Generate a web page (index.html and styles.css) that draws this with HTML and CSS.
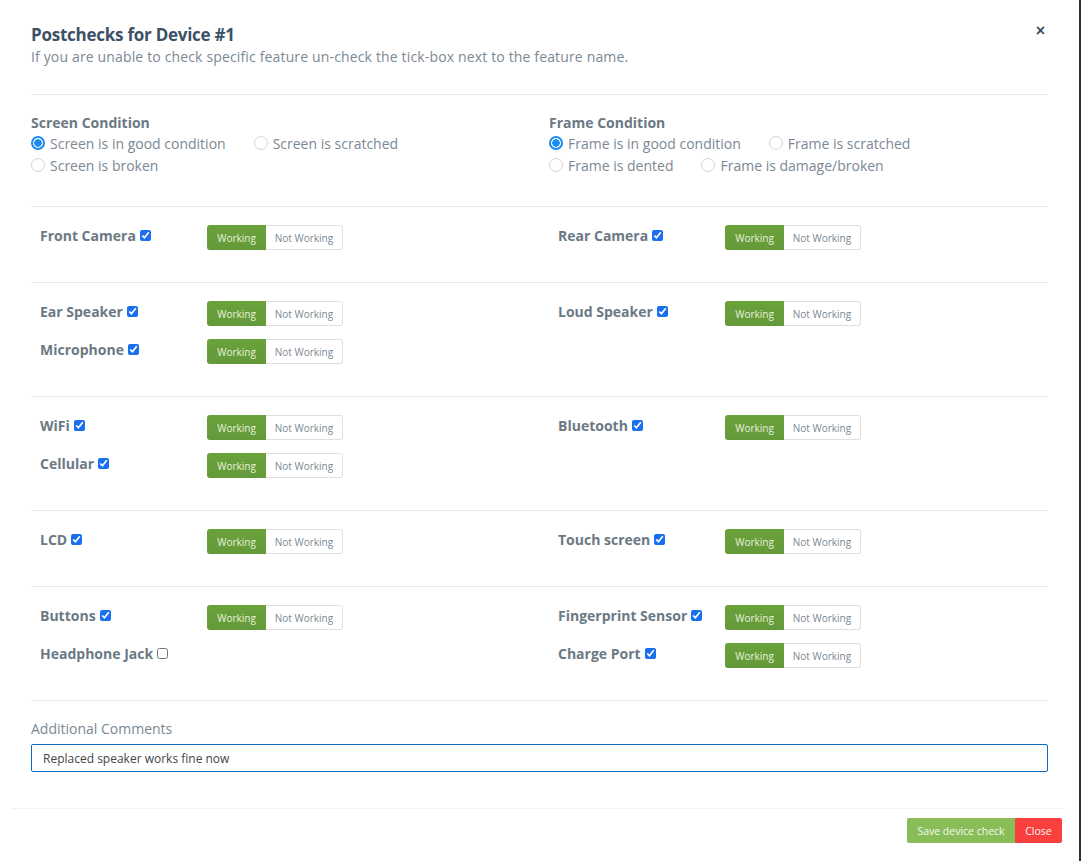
FILE: index.html
```html
<!DOCTYPE html>
<html lang="en">
<head>
    <meta charset="UTF-8">
    <meta name="viewport" content="width=device-width, initial-scale=1.0">
    <title>Postchecks for Device #1</title>
    <link rel="stylesheet" href="styles.css">
</head>
<body>
    <div class="modal">
        <div class="modal-header">
            <div>
                <h2 class="modal-title">Postchecks for Device #1</h2>
                <p class="modal-sub">If you are unable to check specific feature un-check the tick-box next to the feature name.</p>
            </div>
            <button class="close-x">&times;</button>
        </div>

        <div class="modal-body">
            <!-- Conditions -->
            <div class="section conditions">
                <div class="col">
                    <div class="cond-title">Screen Condition</div>
                    <div class="radios">
                        <label class="radio"><input type="radio" name="screen" checked> Screen is in good condition</label>
                        <label class="radio"><input type="radio" name="screen"> Screen is scratched</label>
                        <label class="radio"><input type="radio" name="screen"> Screen is broken</label>
                    </div>
                </div>
                <div class="col">
                    <div class="cond-title">Frame Condition</div>
                    <div class="radios">
                        <label class="radio"><input type="radio" name="frame" checked> Frame is in good condition</label>
                        <label class="radio"><input type="radio" name="frame"> Frame is scratched</label>
                        <label class="radio"><input type="radio" name="frame"> Frame is dented</label>
                        <label class="radio"><input type="radio" name="frame"> Frame is damage/broken</label>
                    </div>
                </div>
            </div>

            <!-- Cameras -->
            <div class="section features">
                <div class="col">
                    <div class="feature">
                        <label class="feature-name">Front Camera <input type="checkbox" checked></label>
                        <div class="btn-group"><span class="on">Working</span><span class="off">Not Working</span></div>
                    </div>
                </div>
                <div class="col">
                    <div class="feature">
                        <label class="feature-name">Rear Camera <input type="checkbox" checked></label>
                        <div class="btn-group"><span class="on">Working</span><span class="off">Not Working</span></div>
                    </div>
                </div>
            </div>

            <!-- Audio -->
            <div class="section features">
                <div class="col">
                    <div class="feature">
                        <label class="feature-name">Ear Speaker <input type="checkbox" checked></label>
                        <div class="btn-group"><span class="on">Working</span><span class="off">Not Working</span></div>
                    </div>
                    <div class="feature">
                        <label class="feature-name">Microphone <input type="checkbox" checked></label>
                        <div class="btn-group"><span class="on">Working</span><span class="off">Not Working</span></div>
                    </div>
                </div>
                <div class="col">
                    <div class="feature">
                        <label class="feature-name">Loud Speaker <input type="checkbox" checked></label>
                        <div class="btn-group"><span class="on">Working</span><span class="off">Not Working</span></div>
                    </div>
                </div>
            </div>

            <!-- Connectivity -->
            <div class="section features">
                <div class="col">
                    <div class="feature">
                        <label class="feature-name">WiFi <input type="checkbox" checked></label>
                        <div class="btn-group"><span class="on">Working</span><span class="off">Not Working</span></div>
                    </div>
                    <div class="feature">
                        <label class="feature-name">Cellular <input type="checkbox" checked></label>
                        <div class="btn-group"><span class="on">Working</span><span class="off">Not Working</span></div>
                    </div>
                </div>
                <div class="col">
                    <div class="feature">
                        <label class="feature-name">Bluetooth <input type="checkbox" checked></label>
                        <div class="btn-group"><span class="on">Working</span><span class="off">Not Working</span></div>
                    </div>
                </div>
            </div>

            <!-- Display -->
            <div class="section features">
                <div class="col">
                    <div class="feature">
                        <label class="feature-name">LCD <input type="checkbox" checked></label>
                        <div class="btn-group"><span class="on">Working</span><span class="off">Not Working</span></div>
                    </div>
                </div>
                <div class="col">
                    <div class="feature">
                        <label class="feature-name">Touch screen <input type="checkbox" checked></label>
                        <div class="btn-group"><span class="on">Working</span><span class="off">Not Working</span></div>
                    </div>
                </div>
            </div>

            <!-- Hardware -->
            <div class="section features">
                <div class="col">
                    <div class="feature">
                        <label class="feature-name">Buttons <input type="checkbox" checked></label>
                        <div class="btn-group"><span class="on">Working</span><span class="off">Not Working</span></div>
                    </div>
                    <div class="feature">
                        <label class="feature-name">Headphone Jack <input type="checkbox"></label>
                    </div>
                </div>
                <div class="col">
                    <div class="feature">
                        <label class="feature-name">Fingerprint Sensor <input type="checkbox" checked></label>
                        <div class="btn-group"><span class="on">Working</span><span class="off">Not Working</span></div>
                    </div>
                    <div class="feature">
                        <label class="feature-name">Charge Port <input type="checkbox" checked></label>
                        <div class="btn-group"><span class="on">Working</span><span class="off">Not Working</span></div>
                    </div>
                </div>
            </div>

            <div class="comments">
                <label class="comments-label" for="comments">Additional Comments</label>
                <input type="text" id="comments" class="comments-input" value="Replaced speaker works fine now">
            </div>
        </div>

        <div class="modal-footer">
            <button class="btn btn-save">Save device check</button>
            <button class="btn btn-close">Close</button>
        </div>
    </div>
</body>
</html>
```

FILE: styles.css
```css
body {
    margin: 0;
    background: #2e2e2e;
    font-family: 'Open Sans', 'Noto Sans', sans-serif;
}

.modal {
    width: 1079px;
    height: 861px;
    background: white;
    box-sizing: border-box;
}

.modal-header {
    display: flex;
    justify-content: space-between;
    align-items: flex-start;
    padding: 24px 31px 0 31px;
}

.modal-title {
    margin: 0;
    font-size: 17px;
    line-height: 22px;
    font-weight: 700;
    letter-spacing: -0.25px;
    color: #3d5166;
}

.modal-sub {
    margin: 1px 0 0 0;
    font-size: 14px;
    line-height: 20px;
    letter-spacing: 0.15px;
    color: #7b8894;
}

.close-x {
    background: none;
    border: none;
    padding: 0;
    margin: 0 3px 0 0;
    font-size: 16px;
    line-height: 14px;
    font-weight: 700;
    color: #3d5166;
    cursor: pointer;
}

.modal-body {
    padding: 0 31px;
}

.section {
    display: grid;
    grid-template-columns: 499px 499px;
    column-gap: 19px;
    border-top: 1px solid #e6e6e6;
}

.conditions {
    margin-top: 27px;
    padding: 18px 0 29px 0;
}

.cond-title {
    font-size: 14px;
    line-height: 20px;
    font-weight: 700;
    color: #6b7984;
}

.radios {
    display: flex;
    flex-wrap: wrap;
}

.radio {
    display: flex;
    align-items: center;
    margin-right: 28px;
    font-size: 14px;
    line-height: 22px;
    color: #7b8894;
    gap: 5px;
}

.radio input {
    appearance: none;
    margin: 0;
    width: 14px;
    height: 14px;
    border: 1px solid #d4d4d4;
    border-radius: 50%;
    box-sizing: border-box;
    background: white;
    position: relative;
    top: -1px;
}

.radio input:checked {
    border: 2px solid #1a8cf2;
    background: radial-gradient(circle, #1a8cf2 0 3.5px, white 4px);
}

.features {
    padding: 18px 9px 19px 9px;
}

.feature {
    display: flex;
    align-items: center;
    height: 25px;
    margin-bottom: 13px;
}

.feature-name {
    display: flex;
    align-items: center;
    gap: 4px;
    width: 167px;
    font-size: 14px;
    font-weight: 700;
    color: #6b7984;
    position: relative;
    top: -2px;
}

.feature-name input {
    margin: 0;
    width: 11px;
    height: 11px;
    accent-color: #1a6ff0;
}

.btn-group {
    display: flex;
    height: 25px;
    font-size: 10px;
}

.btn-group span {
    display: flex;
    align-items: center;
    justify-content: center;
    box-sizing: border-box;
}

.btn-group .on {
    width: 59px;
    background: linear-gradient(#6aa23a, #64993a);
    color: #e8f1df;
    border-radius: 3px 0 0 3px;
}

.btn-group .off {
    width: 77px;
    background: white;
    color: #7b8894;
    border: 1px solid #e0e0e0;
    border-left: none;
    border-radius: 0 3px 3px 0;
}

.comments {
    border-top: 1px solid #e6e6e6;
    padding: 18px 0 36px 0;
}

.comments-label {
    display: block;
    font-size: 14px;
    line-height: 20px;
    color: #7b8894;
    margin-bottom: 5px;
}

.comments-input {
    display: block;
    width: 100%;
    height: 28px;
    box-sizing: border-box;
    border: 1px solid #0b6cc2;
    border-radius: 2px;
    padding: 0 11px;
    font-family: 'Open Sans', sans-serif;
    font-size: 12px;
    color: #444;
    outline: none;
}

.modal-footer {
    display: flex;
    justify-content: flex-end;
    margin: 0 13px 0 12px;
    padding: 9px 4px 0 0;
    border-top: 1px solid #f3f3f3;
}

.btn {
    height: 25px;
    border: none;
    font-family: 'Open Sans', sans-serif;
    font-size: 10.5px;
    color: #f4f8ef;
    padding: 0 8px;
    cursor: pointer;
}

.btn-save {
    width: 108px;
    background: #88bd57;
    border-radius: 2px 0 0 2px;
}

.btn-close {
    width: 47px;
    background: #fa3f3f;
    border-radius: 0 2px 2px 0;
}
```
